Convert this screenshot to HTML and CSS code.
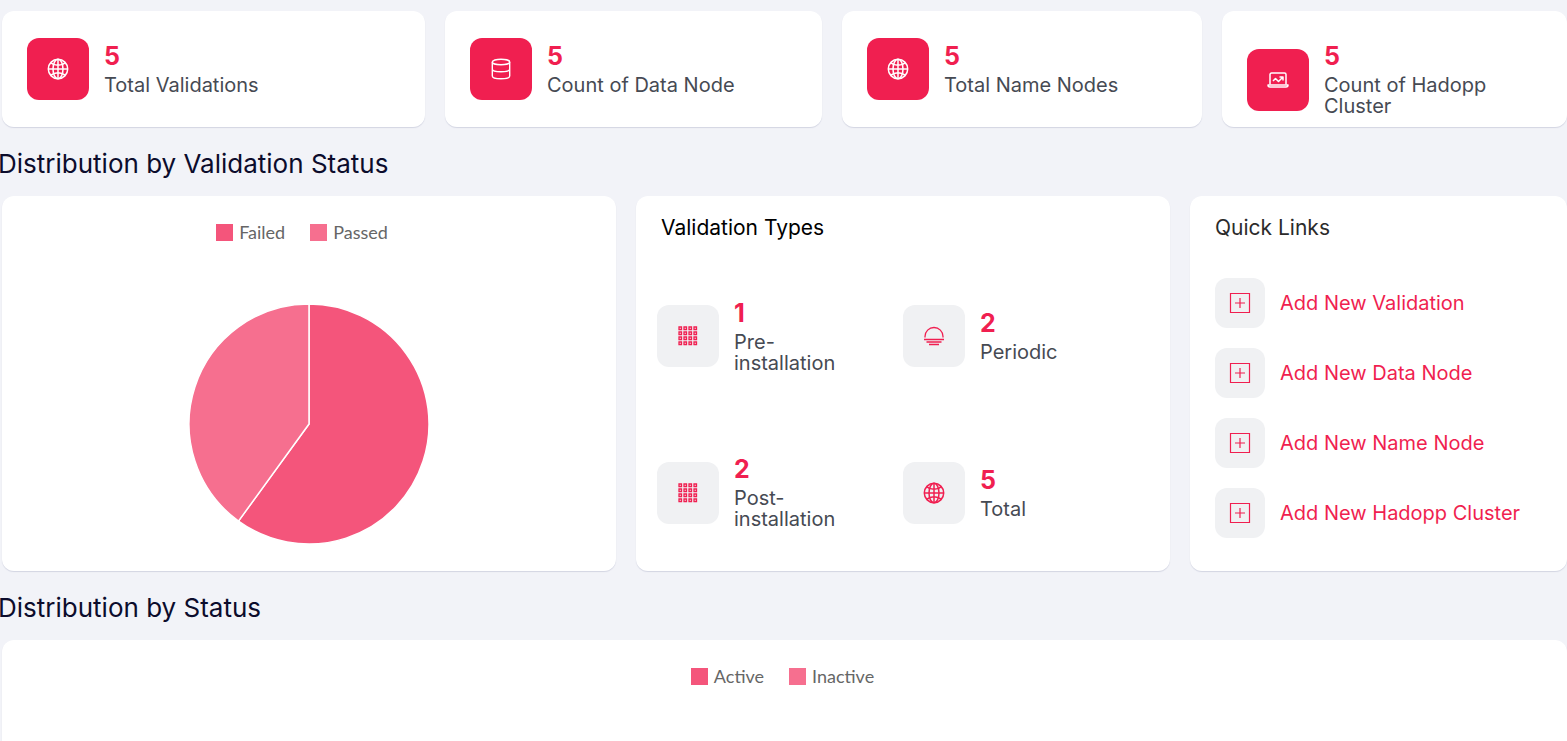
FILE: index.html
```html
<!DOCTYPE html>
<html lang="en">
<head>
<meta charset="utf-8">
<title>Validation Dashboard</title>
<link rel="stylesheet" href="styles.css">
</head>
<body>
<svg class="sprite" aria-hidden="true">
  <symbol id="globe" viewBox="0 0 22 22">
    <g fill="none" stroke="currentColor" stroke-width="1.500">
      <circle cx="11" cy="11" r="9.7"/>
      <ellipse cx="11" cy="11" rx="5" ry="9.7"/>
      <path d="M11 1.3v19.4M1.3 11h19.4M3.6 4.6C7.5 8.2 14.5 8.2 18.4 4.6M3.6 17.4c3.900-3.600 10.900-3.600 14.800 0"/>
    </g>
  </symbol>
  <symbol id="database" viewBox="0 0 22 22">
    <g fill="none" stroke="currentColor" stroke-width="1.400">
      <ellipse cx="11" cy="4" rx="8.700" ry="2.800"/>
      <path d="M2.300 4v14c0 1.600 3.900 2.800 8.700 2.800s8.700-1.200 8.700-2.800V4M2.300 11c0 1.600 3.900 2.800 8.700 2.800s8.700-1.200 8.700-2.800"/>
    </g>
  </symbol>
  <symbol id="laptop" viewBox="0 0 22 22">
    <g fill="none" stroke="currentColor" stroke-width="1.500" stroke-linejoin="round">
      <path d="M3 15.500V5.500a1.500 1.500 0 0 1 1.500-1.500h13A1.500 1.500 0 0 1 19 5.500v10"/>
      <path d="M1 16h20a2 2 0 0 1-2 2H3a2 2 0 0 1-2-2z"/>
      <path d="M6 12l2.500-2.500 3 3L15.500 8.500M12.500 8h3.500v3.500"/>
    </g>
  </symbol>
  <symbol id="dots" viewBox="0 0 20 20">
    <path fill="none" stroke="currentColor" stroke-width="1.3" d="M1 1h2.500v2.500H1zM6 1h2.500v2.500H6zM11 1h2.500v2.500H11zM16 1h2.500v2.500H16zM1 6h2.500v2.500H1zM6 6h2.500v2.500H6zM11 6h2.500v2.500H11zM16 6h2.500v2.500H16zM1 11h2.500v2.500H1zM6 11h2.500v2.500H6zM11 11h2.500v2.500H11zM16 11h2.500v2.500H16zM1 16h2.500v2.500H1zM6 16h2.500v2.500H6zM11 16h2.500v2.500H11zM16 16h2.500v2.500H16z"/>
  </symbol>
  <symbol id="horizon" viewBox="0 0 22 22">
    <path fill="none" stroke="currentColor" stroke-width="1.300" d="M2 12.500V11.500a9 9 0 0 1 18 0v1M1 14.500h20M3.500 17h15M6 19.500h10"/>
  </symbol>
  <symbol id="plus" viewBox="0 0 22 22">
    <path fill="none" stroke="currentColor" stroke-width="1.200" d="M1.500 1.500h19v19h-19zM11 6v10M6 11h10"/>
  </symbol>
</svg>

<main class="page">
  <section class="stats">
    <article class="card stat">
      <span class="tile tile-solid"><svg class="icon"><use href="#globe"/></svg></span>
      <div class="stat-text"><strong class="count">5</strong><span class="label">Total Validations</span></div>
    </article>
    <article class="card stat">
      <span class="tile tile-solid"><svg class="icon"><use href="#database"/></svg></span>
      <div class="stat-text"><strong class="count">5</strong><span class="label">Count of Data Node</span></div>
    </article>
    <article class="card stat">
      <span class="tile tile-solid"><svg class="icon"><use href="#globe"/></svg></span>
      <div class="stat-text"><strong class="count">5</strong><span class="label">Total Name Nodes</span></div>
    </article>
    <article class="card stat">
      <span class="tile tile-solid"><svg class="icon"><use href="#laptop"/></svg></span>
      <div class="stat-text"><strong class="count">5</strong><span class="label">Count of Hadopp Cluster</span></div>
    </article>
  </section>

  <h2 class="section-title">Distribution by Validation Status</h2>

  <section class="panels">
    <article class="card chart">
      <ul class="legend legend-pie">
        <li class="legend-item"><span class="swatch swatch-dark"></span>Failed</li>
        <li class="legend-item"><span class="swatch swatch-light"></span>Passed</li>
      </ul>
      <svg class="pie" viewBox="-120 -120 240 240" role="img" aria-label="Failed 3, Passed 2">
        <g stroke="#fff" stroke-width="1.500" stroke-linejoin="round">
          <path fill="#f4557b" d="M0 0V-120A120 120 0 1 1 -70.530 97.080Z"/>
          <path fill="#f66f8f" d="M0 0L-70.530 97.080A120 120 0 0 1 0 -120Z"/>
        </g>
      </svg>
    </article>

    <article class="card types">
      <h3 class="card-title title-black">Validation Types</h3>
      <div class="types-grid">
        <div class="type">
          <span class="tile"><svg class="icon icon-dots"><use href="#dots"/></svg></span>
          <div class="stat-text"><strong class="count">1</strong><span class="label">Pre-installation</span></div>
        </div>
        <div class="type">
          <span class="tile"><svg class="icon"><use href="#horizon"/></svg></span>
          <div class="stat-text"><strong class="count">2</strong><span class="label">Periodic</span></div>
        </div>
        <div class="type">
          <span class="tile"><svg class="icon icon-dots"><use href="#dots"/></svg></span>
          <div class="stat-text"><strong class="count">2</strong><span class="label">Post-installation</span></div>
        </div>
        <div class="type">
          <span class="tile"><svg class="icon"><use href="#globe"/></svg></span>
          <div class="stat-text"><strong class="count">5</strong><span class="label">Total</span></div>
        </div>
      </div>
    </article>

    <nav class="card links" aria-labelledby="links-title">
      <h3 class="card-title" id="links-title">Quick Links</h3>
      <ul class="link-list">
        <li><a class="link" href="#"><span class="tile tile-small"><svg class="icon"><use href="#plus"/></svg></span>Add New Validation</a></li>
        <li><a class="link" href="#"><span class="tile tile-small"><svg class="icon"><use href="#plus"/></svg></span>Add New Data Node</a></li>
        <li><a class="link" href="#"><span class="tile tile-small"><svg class="icon"><use href="#plus"/></svg></span>Add New Name Node</a></li>
        <li><a class="link" href="#"><span class="tile tile-small"><svg class="icon"><use href="#plus"/></svg></span>Add New Hadopp Cluster</a></li>
      </ul>
    </nav>
  </section>

  <h2 class="section-title">Distribution by Status</h2>

  <section class="status">
    <article class="card chart chart-status">
      <ul class="legend">
        <li class="legend-item"><span class="swatch swatch-dark"></span>Active</li>
        <li class="legend-item"><span class="swatch swatch-light"></span>Inactive</li>
      </ul>
    </article>
  </section>
</main>
</body>
</html>
```
FILE: styles.css
```css
* {
  box-sizing: border-box;
}

body {
  margin: 0;
  height: 100vh;
  overflow: hidden;
  background: #f2f3f8;
  color: #464a53;
  font-family: Inter, "Open Sans", sans-serif;
  font-size: 20px;
}

ul {
  margin: 0;
  padding: 0;
  list-style: none;
}

.sprite {
  display: none;
}

.page {
  padding-top: 11px;
}

.stats,
.panels,
.status {
  display: grid;
  gap: 20px;
  padding-left: 2px;
}

.stats {
  grid-template-columns: 423fr 377fr 360fr 345fr;
}

.panels {
  grid-template-columns: 614fr 534fr 377fr;
}

.card {
  min-width: 0;
  border-radius: 12px;
  background: #fff;
  box-shadow: 0 1px 1px #d3d5e2;
}

.stat {
  display: grid;
  grid-template-columns: auto 1fr;
  align-content: start;
  align-items: center;
  gap: 15px;
  min-height: 116px;
  padding: 27px 25px 5px;
}

.tile {
  display: flex;
  flex: none;
  align-items: center;
  justify-content: center;
  width: 62px;
  height: 62px;
  border-radius: 12px;
  background: #f0f1f3;
  color: #f01f50;
}

.tile-solid {
  background: #f01f50;
  color: #fff;
}

.tile-small {
  width: 50px;
  height: 50px;
}

.icon {
  width: 22px;
  height: 22px;
}

.icon-dots {
  width: 20px;
  height: 20px;
}

.stat-text {
  display: flex;
  flex-direction: column;
  gap: 4px;
  min-width: 0;
  padding: 3px 0 4px;
}

.count {
  color: #f01f50;
  font-size: 25px;
  font-weight: 700;
  line-height: 30px;
}

.label {
  line-height: 21px;
}

.section-title {
  margin: 21px 0 16px -2px;
  color: #0c0c2c;
  font-size: 26px;
  font-weight: 400;
  line-height: 32px;
}

.card-title {
  margin: 0;
  padding: 17px 25px 15px;
  color: #2b2b2b;
  font-size: 21px;
  font-weight: 400;
  line-height: 30px;
}

.title-black {
  color: #000;
}

.chart {
  display: flex;
  flex-direction: column;
  align-items: center;
  gap: 62px;
  padding: 26px 25px 27px;
}

.chart-status {
  min-height: 375px;
}

.legend {
  display: flex;
  gap: 25px;
  padding-right: 4px;
  color: #666;
  font-family: Lato, sans-serif;
  font-size: 18px;
  line-height: 20px;
}

.legend-pie {
  padding-right: 14px;
}

.legend-item {
  display: flex;
  align-items: center;
  gap: 6px;
}

.swatch {
  width: 17px;
  height: 17px;
}

.swatch-dark {
  background: #f4557b;
}

.swatch-light {
  background: #f66f8f;
}

.pie {
  width: 240px;
  height: 240px;
}

.types {
  display: flex;
  flex-direction: column;
}

.types-grid {
  display: grid;
  flex: 1;
  grid-template-columns: 1fr 1fr;
  grid-template-rows: 1fr 1fr;
  padding: 0 21px;
}

.type {
  display: flex;
  align-items: center;
  gap: 15px;
  padding-right: 50px;
}

.link-list {
  display: flex;
  flex-direction: column;
  gap: 20px;
  padding: 20px 25px 33px;
}

.link {
  display: flex;
  align-items: center;
  gap: 15px;
  color: #f01f50;
  text-decoration: none;
}
```
